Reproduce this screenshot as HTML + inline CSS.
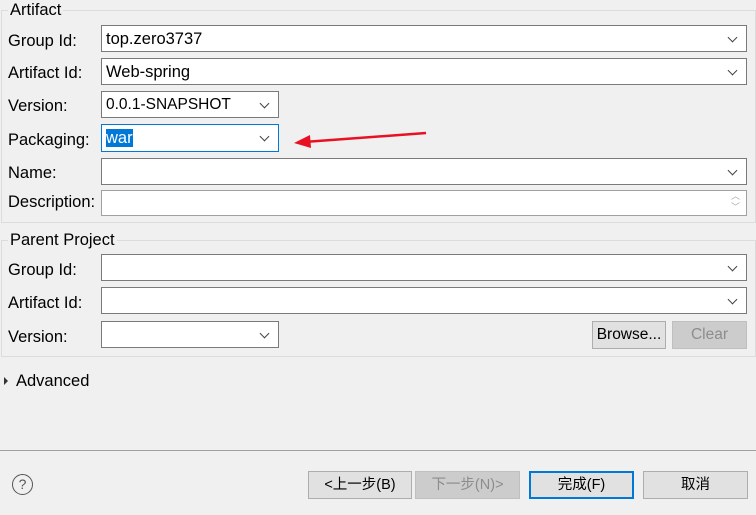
<!DOCTYPE html><html><head><style>
body{margin:0;width:756px;height:515px;background:#f0f0f0;font-family:"Liberation Sans","Noto Sans CJK SC",sans-serif;font-size:16.5px;color:#000;position:relative;overflow:hidden}
.a{position:absolute}
.grp{position:absolute;border:1px solid #dcdcdc;}
.gl{position:absolute;background:#f0f0f0;padding:0 2px;left:6px;top:-10px;line-height:18px}
.lbl{position:absolute;left:8px;line-height:18px}
.f{position:absolute;background:#fff;border:1px solid #7a7a7a;box-sizing:border-box;line-height:26px;padding-left:4px}
.dd:after{content:"";position:absolute;right:10px;top:8px;width:6px;height:6px;border-right:1px solid #444;border-bottom:1px solid #444;transform:rotate(45deg)}
.b{position:absolute;box-sizing:border-box;border:1px solid #adadad;background:#e1e1e1;text-align:center;line-height:26px;font-size:14.5px}
</style></head><body>
<div class="grp" style="left:1px;top:10px;width:753px;height:211px"><div class="gl">Artifact</div></div>
<div class="lbl" style="top:32px">Group Id:</div>
<div class="f dd" style="left:101px;top:25px;width:646px;height:27px">top.zero3737</div>
<div class="lbl" style="top:64px">Artifact Id:</div>
<div class="f dd" style="left:101px;top:58px;width:646px;height:27px">Web-spring</div>
<div class="lbl" style="top:97px">Version:</div>
<div class="f dd" style="left:101px;top:91px;width:178px;height:27px;font-size:15.5px">0.0.1-SNAPSHOT</div>
<div class="lbl" style="top:131px">Packaging:</div>
<div class="f dd" style="left:101px;top:124px;width:178px;height:28px;border-color:#0078d7"><span style="background:#0078d7;color:#fff;line-height:18px;display:inline-block">war</span></div>
<div class="lbl" style="top:164px">Name:</div>
<div class="f dd" style="left:101px;top:158px;width:646px;height:27px"></div>
<div class="lbl" style="top:193px">Description:</div>
<div class="f" style="left:101px;top:190px;width:646px;height:26px;border-color:#a0a0a0"><span class="a" style="right:6px;top:0;font-size:9px;line-height:11px;color:#aaa">︿<br>﹀</span></div>
<svg class="a" style="left:290px;top:125px" width="140" height="25"><line x1="136" y1="8" x2="14" y2="17" stroke="#e81123" stroke-width="2.5"/><polygon points="4,18 20,10 21,23" fill="#e81123"/></svg>
<div class="grp" style="left:1px;top:240px;width:753px;height:115px"><div class="gl">Parent Project</div></div>
<div class="lbl" style="top:261px">Group Id:</div>
<div class="f dd" style="left:101px;top:254px;width:646px;height:27px"></div>
<div class="lbl" style="top:294px">Artifact Id:</div>
<div class="f dd" style="left:101px;top:287px;width:646px;height:27px"></div>
<div class="lbl" style="top:328px">Version:</div>
<div class="f dd" style="left:101px;top:321px;width:178px;height:27px"></div>
<div class="b" style="left:592px;top:321px;width:74px;height:28px;font-size:15.5px">Browse...</div>
<div class="b" style="left:672px;top:321px;width:75px;height:28px;font-size:15.5px;color:#8d8d8d;background:#cccccc;border-color:#bfbfbf">Clear</div>
<div class="a" style="left:4px;top:377px;width:0;height:0;border-left:4px solid #333;border-top:4px solid transparent;border-bottom:4px solid transparent"></div>
<div class="a" style="left:16px;top:372px;line-height:18px">Advanced</div>
<div class="a" style="left:0;top:450px;width:756px;height:1px;background:#a0a0a0"></div>
<div class="a" style="left:12px;top:474px;width:19px;height:19px;border:1px solid #555;border-radius:50%;text-align:center;line-height:19px;font-size:14px;color:#555">?</div>
<div class="b" style="left:308px;top:471px;width:104px;height:28px">&lt;上一步(B)</div>
<div class="b" style="left:415px;top:471px;width:105px;height:28px;color:#8d8d8d;background:#cccccc;border-color:#bfbfbf">下一步(N)&gt;</div>
<div class="b" style="left:529px;top:471px;width:105px;height:28px;border:2px solid #0078d7;line-height:24px">完成(F)</div>
<div class="b" style="left:643px;top:471px;width:105px;height:28px">取消</div>
</body></html>
